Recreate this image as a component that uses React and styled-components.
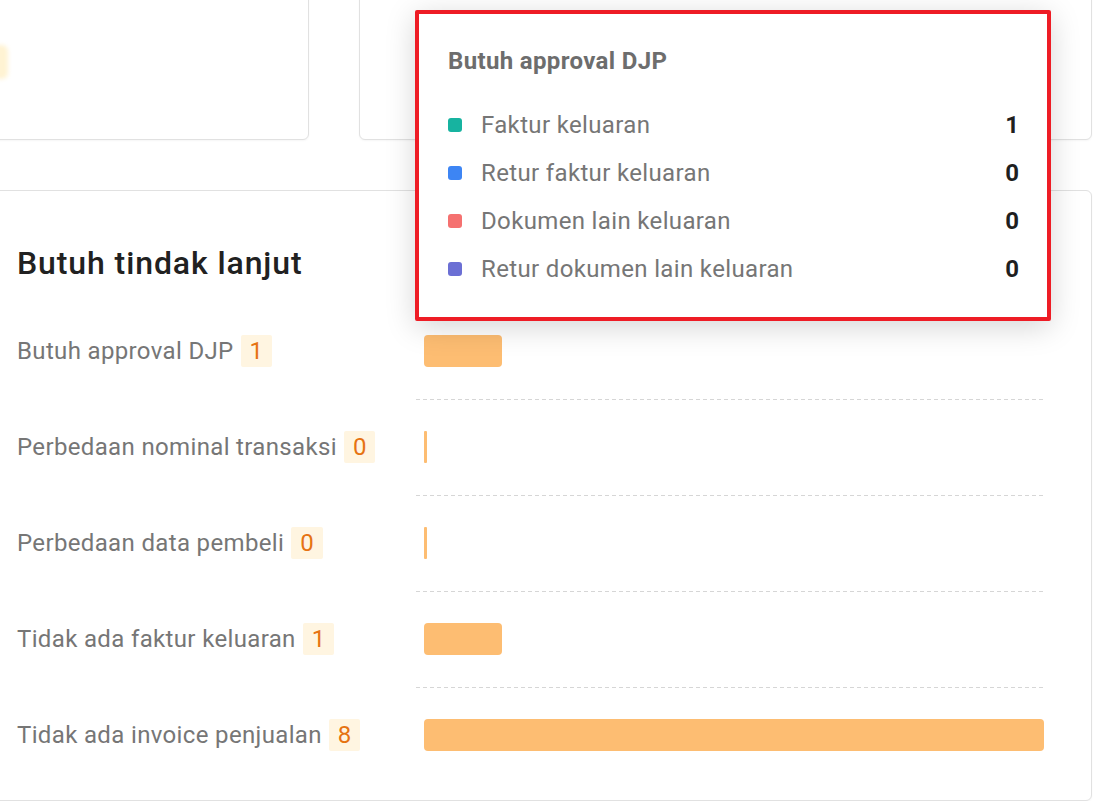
import React from "react";
import styled, { createGlobalStyle } from "styled-components";

const GlobalStyle = createGlobalStyle`
  html, body { margin: 0; padding: 0; background: #ffffff; }
  body { font-family: Roboto, "Noto Sans", Arial, sans-serif; overflow: hidden; }
  * { box-sizing: border-box; }
`;

const Page = styled.div`
  position: relative;
  margin: -30px 8px 0 -40px;
  display: flex;
  flex-direction: column;
  gap: 50px;
`;

const TopRow = styled.div`
  display: grid;
  grid-template-columns: 349px 1fr;
  gap: 50px;
  height: 170px;
`;

const Card = styled.div`
  background: #fff;
  border: 1px solid #e1e1e1;
  border-radius: 6px;
  box-shadow: 0 1px 2px rgba(0, 0, 0, 0.04);
`;

const SummaryCard = styled(Card)`
  padding: 74px 0 0 20px;
`;

const FadedChip = styled.span`
  display: block;
  width: 27px;
  height: 34px;
  border-radius: 6px;
  background: #fff3d3;
  filter: blur(2px);
`;

const MainCard = styled(Card)`
  height: 611px;
  padding: 54px 45px 16px 56px;
`;

const Title = styled.h2`
  margin: 0 0 22px;
  font-size: 32px;
  line-height: 36px;
  font-weight: 500;
  color: #212121;
  letter-spacing: 0.9px;
`;

const Row = styled.div`
  display: grid;
  grid-template-columns: 399px 630px;
  height: 96px;
`;

const LabelCell = styled.div`
  display: flex;
  align-items: center;
  gap: 7px;
`;

const Label = styled.span`
  font-size: 24px;
  color: #767676;
  letter-spacing: 0.35px;
`;

const CountBadge = styled.span`
  display: inline-flex;
  align-items: center;
  height: 32px;
  padding: 0 9px;
  background: #fff5e1;
  color: #e67312;
  font-size: 24px;
  border-radius: 2px;
`;

const ChartCell = styled.div`
  display: flex;
  align-items: center;
  padding-left: 8px;
  background: ${(p) =>
    p.$divider
      ? "repeating-linear-gradient(to right, #d6d6d6 0 4px, transparent 4px 7px) top / 100% 1px no-repeat"
      : "none"};
`;

const Bar = styled.div`
  height: 32px;
  border-radius: ${(p) => (p.$thin ? "1px" : "4px")};
  background: #fdbd72;
`;

const Tooltip = styled.div`
  position: absolute;
  left: 455px;
  top: 40px;
  width: 636px;
  height: 311px;
  background: #fff;
  border: 4px solid #ee1c25;
  border-radius: 2px;
  box-shadow: 0 6px 30px rgba(0, 0, 0, 0.17);
  padding: 33px 28px 0 29px;
`;

const TipTitle = styled.div`
  font-size: 24px;
  line-height: 28px;
  font-weight: 700;
  color: #6d6d6d;
  letter-spacing: 0.35px;
  margin-bottom: 26px;
`;

const TipRow = styled.div`
  display: flex;
  align-items: center;
  height: 48px;
`;

const Dot = styled.span`
  width: 14px;
  height: 14px;
  border-radius: 3px;
  background: ${(p) => p.$color};
  margin-right: 19px;
  flex: none;
`;

const TipLabel = styled.span`
  flex: 1;
  font-size: 24px;
  color: #767676;
  letter-spacing: 0.35px;
`;

const TipValue = styled.span`
  font-size: 24px;
  font-weight: 700;
  color: #1f1f1f;
`;

const rows = [
  { label: "Butuh approval DJP", value: 1 },
  { label: "Perbedaan nominal transaksi", value: 0 },
  { label: "Perbedaan data pembeli", value: 0 },
  { label: "Tidak ada faktur keluaran", value: 1 },
  { label: "Tidak ada invoice penjualan", value: 8 },
];

const tipRows = [
  { label: "Faktur keluaran", value: 1, color: "#17b3a0" },
  { label: "Retur faktur keluaran", value: 0, color: "#3d85f4" },
  { label: "Dokumen lain keluaran", value: 0, color: "#f57170" },
  { label: "Retur dokumen lain keluaran", value: 0, color: "#6b6fd4" },
];

const UNIT = 77.5;

export default function App() {
  return (
    <>
      <GlobalStyle />
      <Page>
        <TopRow>
          <SummaryCard>
            <FadedChip />
          </SummaryCard>
          <Card />
        </TopRow>
        <MainCard>
          <Title>Butuh tindak lanjut</Title>
          {rows.map((r, i) => (
            <Row key={r.label}>
              <LabelCell>
                <Label>{r.label}</Label>
                <CountBadge>{r.value}</CountBadge>
              </LabelCell>
              <ChartCell $divider={i > 0}>
                <Bar
                  $thin={r.value === 0}
                  style={{ width: r.value === 0 ? 3 : r.value * UNIT }}
                />
              </ChartCell>
            </Row>
          ))}
        </MainCard>
        <Tooltip>
          <TipTitle>Butuh approval DJP</TipTitle>
          {tipRows.map((t) => (
            <TipRow key={t.label}>
              <Dot $color={t.color} />
              <TipLabel>{t.label}</TipLabel>
              <TipValue>{t.value}</TipValue>
            </TipRow>
          ))}
        </Tooltip>
      </Page>
    </>
  );
}
